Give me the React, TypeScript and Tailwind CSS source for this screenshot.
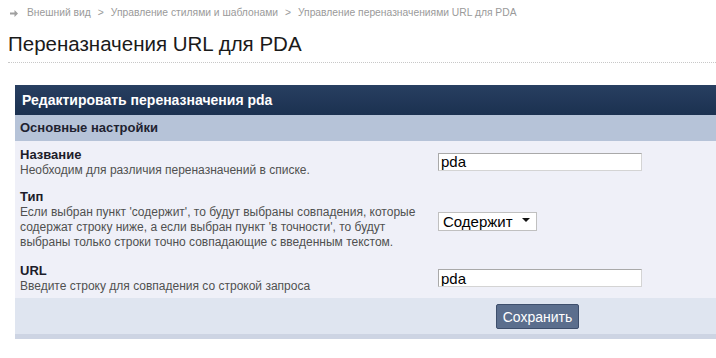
export default function App() {
  return (
    <div className="w-[716px] h-[358px] overflow-hidden bg-white font-['Liberation_Sans',Arial,sans-serif]">
      {/* breadcrumb */}
      <div className="flex items-center pl-[10px] pt-[6px] h-[20px] text-[10.3px] leading-[14px] text-[#9a9a9a]">
        <svg width="8" height="7" viewBox="0 0 8 7" className="mr-[9px]">
          <path d="M0 2.5h4.5V0L8 3.5 4.5 7V4.5H0z" fill="#a0a0a0" />
        </svg>
        <span>Внешний вид</span>
        <span className="mx-[7px]">&gt;</span>
        <span>Управление стилями и шаблонами</span>
        <span className="mx-[7px]">&gt;</span>
        <span>Управление переназначениями URL для PDA</span>
      </div>

      <h1 className="ml-[8px] mt-[12px] text-[20.5px] leading-[24px] text-[#1a1a1a]">
        Переназначения URL для PDA
      </h1>
      <div className="ml-[8px] mt-[6px] border-t border-dotted border-[#c8c8c8]" />

      {/* panel */}
      <div className="ml-[15px] mt-[22px] w-[720px]">
        <div className="h-[30px] flex items-center pl-[7px] bg-gradient-to-b from-[#283f61] to-[#1b3150] text-white text-[14px] font-bold">
          Редактировать переназначения pda
        </div>
        <div className="h-[26px] flex items-center pl-[5px] bg-[#b6c3d8] text-[#1e2230] text-[13px] font-bold">
          Основные настройки
        </div>

        <div className="bg-[#eff0f8]">
          <div className="grid grid-cols-[418px_1fr] items-center px-[5px] pt-[5px] pb-[6px]">
            <div>
              <div className="text-[13px] leading-[17px] font-bold text-[#1c1c2a]">Название</div>
              <div className="text-[12px] leading-[14px] text-[#505050]">
                Необходим для различия переназначений в списке.
              </div>
            </div>
            <input
              defaultValue="pda"
              className="w-[204px] h-[18px] bg-white border border-[#a9a9a9] border-b-[#d4d4d4] border-r-[#d4d4d4] px-[2px] text-[15px] leading-[16px] text-black outline-none"
            />
          </div>

          <div className="grid grid-cols-[418px_1fr] items-center px-[5px] pt-[5px] pb-[7px]">
            <div>
              <div className="text-[13px] leading-[17px] font-bold text-[#1c1c2a]">Тип</div>
              <div className="text-[12px] leading-[15px] text-[#505050] w-[410px]">
                Если выбран пункт 'содержит', то будут выбраны совпадения, которые содержат строку ниже, а если выбран пункт 'в точности', то будут выбраны только строки точно совпадающие с введенным текстом.
              </div>
            </div>
            <div className="relative w-[99px] h-[19px]">
              <select className="appearance-none w-[99px] h-[19px] bg-white border border-[#c0c0c0] pl-[4px] text-[15px] leading-[17px] text-black outline-none">
                <option>Содержит</option>
                <option>В точности</option>
              </select>
              <svg width="8" height="4" viewBox="0 0 8 4" className="absolute right-[7px] top-[8px] pointer-events-none">
                <path d="M0 0h8L4 4z" fill="#111" />
              </svg>
            </div>
          </div>

          <div className="grid grid-cols-[418px_1fr] items-center px-[5px] pt-[5px] pb-[4px]">
            <div>
              <div className="text-[13px] leading-[17px] font-bold text-[#1c1c2a]">URL</div>
              <div className="text-[12px] leading-[15px] text-[#505050]">
                Введите строку для совпадения со строкой запроса
              </div>
            </div>
            <input
              defaultValue="pda"
              className="w-[204px] h-[18px] bg-white border border-[#a9a9a9] border-b-[#d4d4d4] border-r-[#d4d4d4] px-[2px] text-[15px] leading-[16px] text-black outline-none"
            />
          </div>
        </div>

        <div className="bg-[#dfe5f0] pl-[481px] pt-[6px] pb-[5px] border-b-[5px] border-[#cdd4e3]">
          <button className="w-[83px] h-[25px] rounded-[2px] bg-[#5b6e8d] border border-[#3e4f6c] text-white text-[14px] leading-[16px]">
            Сохранить
          </button>
        </div>
      </div>
    </div>
  );
}
